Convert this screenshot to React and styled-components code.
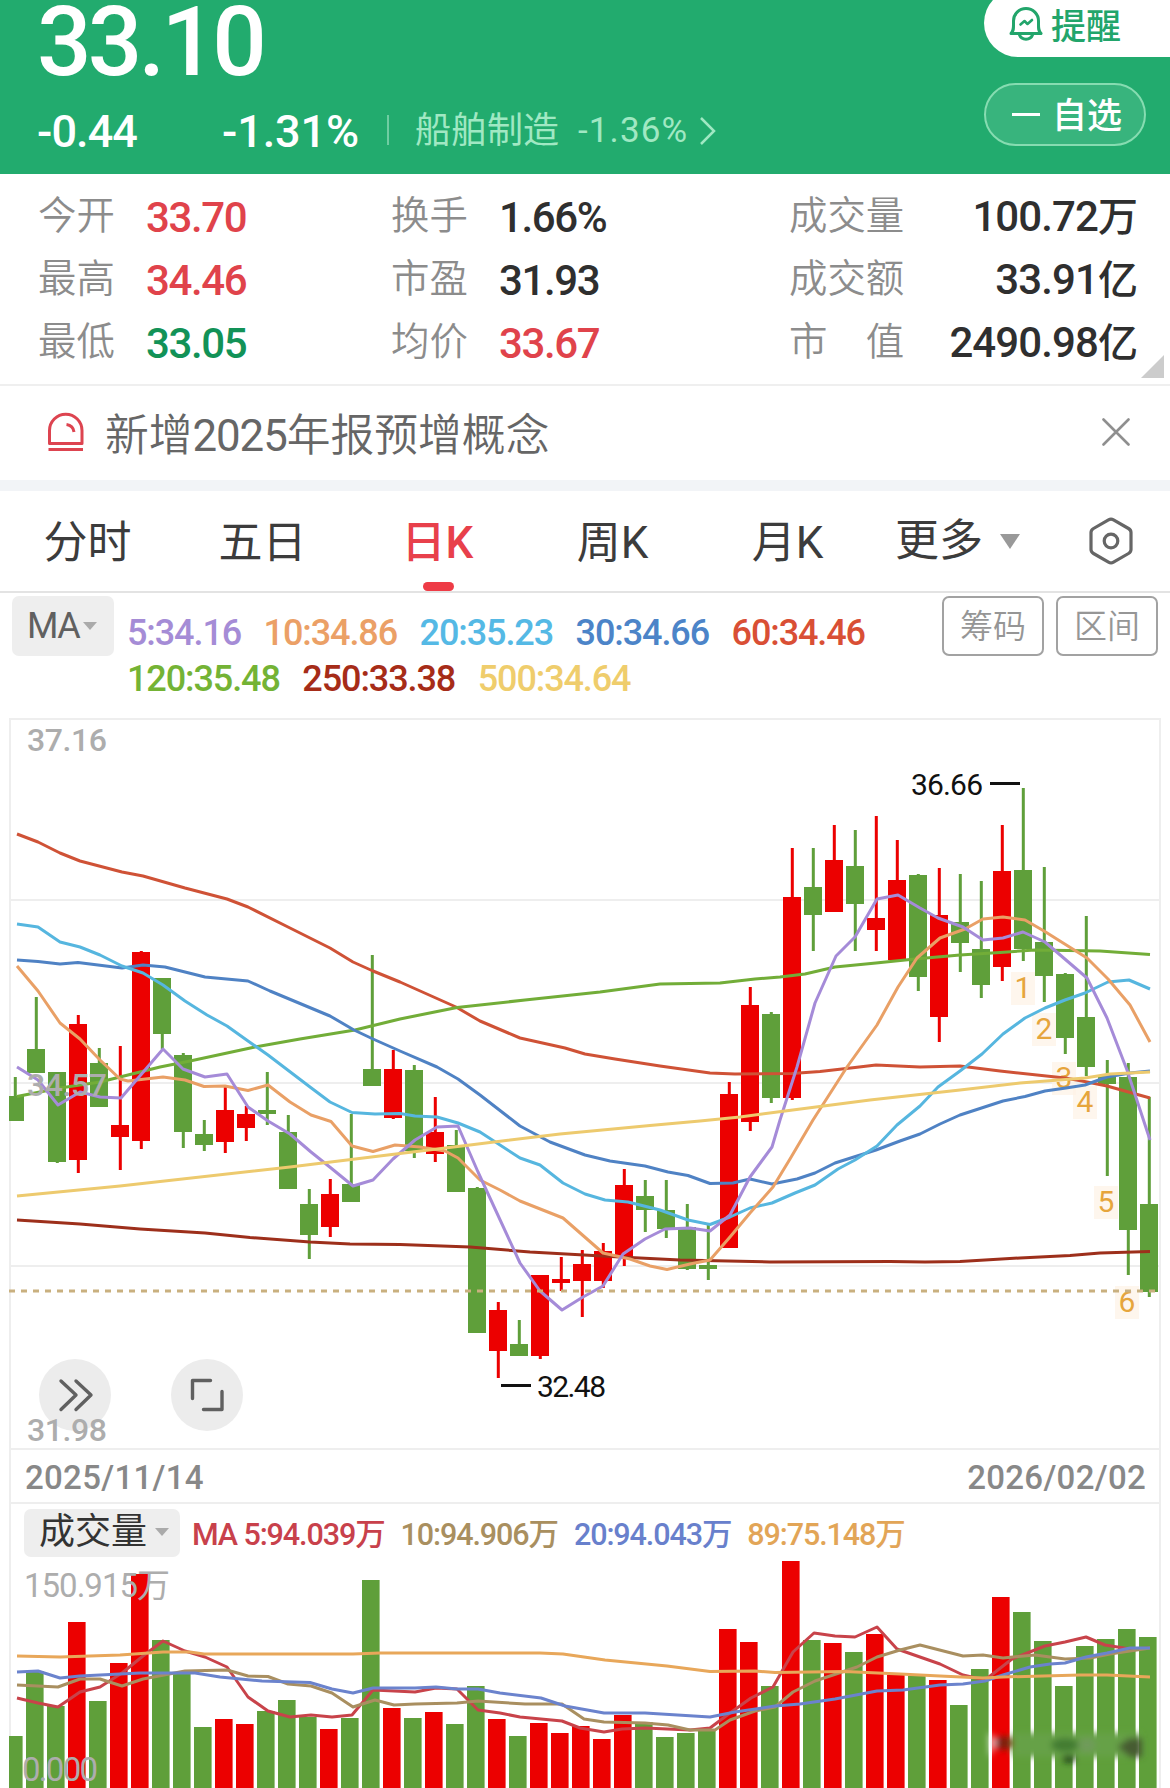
import React from "react";
import styled, { createGlobalStyle } from "styled-components";

const RED = "#ec0000";
const GREEN = "#5f9f3a";

const GlobalStyle = createGlobalStyle`
  * {
    box-sizing: border-box;
  }

  body {
    margin: 0;
    background: #fff;
    font-family: Roboto, "Noto Sans CJK SC", sans-serif;
  }
`;

const Page = styled.main`
  width: 1170px;
  height: 1788px;
  overflow: hidden;
  background: #fff;
`;

const Header = styled.header`
  display: flex;
  justify-content: space-between;
  height: 174px;
  padding-left: 37px;
  background: #22ab6e;
  color: #fff;
`;

const Price = styled.div`
  height: 84px;
  line-height: 84px;
  font-size: 96px;
  font-weight: 500;
  letter-spacing: -3.8px;
`;

const ChangeRow = styled.div`
  display: flex;
  align-items: center;
  height: 60px;
  margin-top: 18px;
`;

const Change = styled.span`
  width: ${(p) => p.$width}px;
  font-size: 45px;
  line-height: 60px;
  font-weight: 500;
  letter-spacing: ${(p) => p.$spacing}px;
  white-space: nowrap;
`;

const Separator = styled.span`
  width: 2px;
  height: 30px;
  margin: 0 26px 4px 0;
  background: #6fcda2;
`;

const Sector = styled.span`
  display: flex;
  align-items: center;
  color: #a0e8c3;
  font-size: 36px;
  line-height: 52px;
  padding-bottom: 3px;
`;

const SectorChange = styled.span`
  margin: 1px 11px 0 19px;
  font-size: 35px;
  letter-spacing: 1.1px;
`;

const Actions = styled.div`
  display: flex;
  flex-direction: column;
  width: 186px;
  gap: 26px;
`;

const ActionPill = styled.button`
  display: flex;
  align-items: center;
  height: 63px;
  width: 162px;
  padding: 0 0 4px 27px;
  border: 2px solid #86dcb1;
  border-radius: 32px;
  background: #38b47d;
  color: #fff;
  font-family: inherit;
  font-size: 35px;
  font-weight: 500;
  white-space: nowrap;
`;

const AlertPill = styled(ActionPill)`
  width: 186px;
  height: 68px;
  margin-top: -11px;
  padding: 1px 0 0 25px;
  border: 0;
  border-radius: 34px 0 0 34px;
  background: #fff;
  color: #22a56b;
  gap: 8px;
`;

const Minus = styled.i`
  width: 28px;
  height: 3px;
  margin: 3px 12px 0 -1px;
  background: #fff;
`;

const Stats = styled.section`
  position: relative;
  display: grid;
  grid-template-columns: 353px 398px 1fr;
  grid-template-rows: repeat(3, 63px);
  height: 212px;
  padding: 12px 32px 0 38px;
  border-bottom: 2px solid #efefef;
`;

const Stat = styled.div`
  display: flex;
  align-items: center;
  justify-content: ${(p) => (p.$spread ? "space-between" : "flex-start")};
`;

const StatLabel = styled.span`
  width: ${(p) => (p.$wide ? 116 : 108)}px;
  color: #8c8c8c;
  font-size: 38.4px;
  font-weight: 350;
  line-height: 56px;
  padding-bottom: 4px;
  white-space: nowrap;
`;

const StatValue = styled.span`
  color: ${(p) => p.$color || "#2f2f2f"};
  font-size: 42px;
  font-weight: 500;
  line-height: 56px;
  letter-spacing: ${(p) => (p.$wide ? -0.9 : -1.4)}px;
  white-space: nowrap;

  small {
    font-size: 40px;
    letter-spacing: 0;
  }
`;

const Corner = styled.i`
  position: absolute;
  right: 6px;
  bottom: 6px;
  border-left: 23px solid transparent;
  border-bottom: 23px solid #ccc;
`;

const Notice = styled.section`
  display: flex;
  align-items: center;
  height: 94px;
  padding: 0 40px 2px 46px;
`;

const NoticeText = styled.span`
  flex: 1;
  margin: 0 0 1px 19px;
  color: #666;
  font-size: 43.8px;
  font-weight: 350;

  span {
    font-weight: 400;
    letter-spacing: -1.1px;
  }
`;

const Band = styled.div`
  height: 11px;
  background: #f2f4f7;
`;

const Tabs = styled.nav`
  display: flex;
  height: 102px;
  border-bottom: 2px solid #e3e3e3;
`;

const Tab = styled.div`
  position: relative;
  width: 175px;
  color: ${(p) => (p.$active ? "#e8404b" : "#3c3c3c")};
  font-size: 44px;
  font-weight: ${(p) => (p.$active ? 500 : 400)};
  line-height: 105px;
  text-align: center;

  &::after {
    content: "";
    display: ${(p) => (p.$active ? "block" : "none")};
    position: absolute;
    left: 73px;
    bottom: 0;
    width: 31px;
    height: 9px;
    border-radius: 5px;
    background: #ee3b46;
  }
`;

const MoreTab = styled(Tab)`
  display: flex;
  align-items: center;
  width: 214px;
  padding-left: 20px;
  gap: 17px;
`;

const Caret = styled.i`
  flex: none;
  border: ${(p) => p.$size}px solid transparent;
  border-top: ${(p) => p.$drop}px solid ${(p) => p.$color};
  border-bottom: 0;
`;

const SettingsIcon = styled.svg`
  margin-top: 26px;
`;

const Legend = styled.section`
  display: flex;
  height: 125px;
  padding: 3px 12px 0;
`;

const Selector = styled.div`
  display: flex;
  align-items: center;
  flex: none;
  width: ${(p) => p.$width}px;
  height: ${(p) => p.$height}px;
  padding: 0 0 ${(p) => p.$lift || 0}px 15px;
  gap: ${(p) => p.$gap}px;
  border-radius: 7px;
  background: #eee;
  color: ${(p) => p.$color};
  font-size: 36px;
`;

const SelectorName = styled.span`
  letter-spacing: ${(p) => p.$spacing || 0}px;
  line-height: 44px;
`;

const LegendValues = styled.div`
  flex: 1;
  padding: 14px 0 0 13px;
`;

const LegendRow = styled.div`
  display: flex;
  gap: 22.5px;
  height: 46px;
  line-height: 46px;
`;

const LegendValue = styled.span`
  color: ${(p) => p.$color};
  font-size: 36px;
  font-weight: 500;
  letter-spacing: -1.1px;
`;

const OutlineButton = styled.button`
  width: 102px;
  height: 60px;
  margin-left: 12px;
  padding: 0 0 4px;
  border: 2px solid #a2a2a2;
  border-radius: 7px;
  background: #fff;
  color: #969696;
  font-family: inherit;
  font-size: 33px;
  font-weight: 350;
`;

const Frame = styled.section`
  margin: 0 9px;
  border: 2px solid #eee;
  border-width: 0 2px;
`;

const Chart = styled.svg`
  display: block;
  overflow: visible;
  font-family: Roboto, "Noto Sans CJK SC", sans-serif;
`;

const Dates = styled.div`
  display: flex;
  justify-content: space-between;
  height: 55px;
  padding: 0 13px 0 14px;
  border-bottom: 2px solid #eee;
  color: #888;
  font-size: 33px;
  font-weight: 500;
  line-height: 57px;
  letter-spacing: 0.3px;
`;

const VolumeHeader = styled.div`
  display: flex;
  height: 56px;
  padding: 5px 0 0 13px;
`;

const VolumeLegend = styled.div`
  display: flex;
  gap: 16px;
  margin-left: 12px;
  line-height: 52px;
`;

const VolumeLegendValue = styled.span`
  color: ${(p) => p.$color};
  font-size: 30.5px;
  font-weight: 500;
  letter-spacing: -1.1px;
`;

const stats = [
  ["今开", "33.70", "", "#e0434b"],
  ["换手", "1.66%", ""],
  ["成交量", "100.72", "万"],
  ["最高", "34.46", "", "#e0434b"],
  ["市盈", "31.93", ""],
  ["成交额", "33.91", "亿"],
  ["最低", "33.05", "", "#129257"],
  ["均价", "33.67", "", "#e0434b"],
  ["市　值", "2490.98", "亿"],
];

const legendRows = [
  [
    ["5:34.16", "#a58cd6"],
    ["10:34.86", "#eba066"],
    ["20:35.23", "#55b9e5"],
    ["30:34.66", "#4c84c8"],
    ["60:34.46", "#d94f35"],
  ],
  [
    ["120:35.48", "#74b335"],
    ["250:33.38", "#a62c18"],
    ["500:34.64", "#efcd6c"],
  ],
];

// color, high, body top, body bottom, low
const candles = [
  ["g", 1077, 1096, 1121, 1121], ["g", 997, 1049, 1073, 1073],
  ["g", 1072, 1072, 1162, 1163], ["r", 1015, 1024, 1160, 1173],
  ["g", 1048, 1063, 1107, 1107], ["r", 1046, 1125, 1137, 1170],
  ["r", 951, 952, 1141, 1149], ["g", 978, 978, 1034, 1049],
  ["g", 1053, 1055, 1132, 1148], ["g", 1120, 1134, 1145, 1151],
  ["r", 1087, 1110, 1142, 1153], ["r", 1106, 1114, 1128, 1141],
  ["g", 1072, 1110, 1114, 1125], ["g", 1115, 1132, 1189, 1189],
  ["g", 1189, 1204, 1235, 1259], ["r", 1179, 1194, 1227, 1237],
  ["g", 1114, 1184, 1202, 1202], ["g", 955, 1069, 1086, 1086],
  ["r", 1050, 1069, 1118, 1119], ["g", 1065, 1070, 1151, 1158],
  ["r", 1097, 1132, 1154, 1162], ["g", 1130, 1145, 1192, 1192],
  ["g", 1187, 1188, 1333, 1333], ["r", 1302, 1310, 1351, 1378],
  ["g", 1320, 1344, 1356, 1356], ["r", 1275, 1275, 1356, 1359],
  ["r", 1257, 1279, 1283, 1291], ["r", 1250, 1264, 1281, 1317],
  ["r", 1243, 1251, 1281, 1288], ["r", 1169, 1185, 1257, 1266],
  ["g", 1180, 1196, 1210, 1232], ["g", 1180, 1210, 1229, 1238],
  ["g", 1204, 1227, 1269, 1270], ["g", 1225, 1265, 1269, 1280],
  ["r", 1082, 1094, 1248, 1248], ["r", 987, 1005, 1122, 1131],
  ["g", 1012, 1014, 1098, 1103], ["r", 848, 897, 1098, 1100],
  ["g", 848, 887, 915, 951], ["r", 825, 860, 912, 912],
  ["g", 830, 866, 904, 951], ["r", 816, 918, 930, 951],
  ["r", 840, 880, 960, 960], ["g", 874, 875, 977, 991],
  ["r", 868, 915, 1017, 1042], ["g", 874, 922, 943, 972],
  ["g", 881, 949, 985, 998], ["r", 825, 871, 967, 981],
  ["g", 788, 870, 949, 961], ["g", 867, 942, 976, 1002],
  ["g", 973, 974, 1038, 1054], ["g", 916, 1017, 1067, 1076],
  ["g", 1060, 1076, 1084, 1176], ["g", 1063, 1077, 1230, 1275],
  ["g", 1097, 1204, 1292, 1297],
];

const priceLines = [
  ["#cf5236", "17,834 38,842 60,853 80,861 122,872 143,876 185,888 227,899 248,907 290,928 330,948 353,962 373,971 400,982 456,1007 480,1021 520,1038 565,1048 585,1054 615,1059 660,1066 710,1073 735,1074 792,1073.5 820,1071.5 855,1067.5 876,1065 920,1067 960,1066 1000,1071 1065,1078 1082,1081 1107,1086 1150,1098"],
  ["#9d2f1b", "17,1220 80,1224 140,1229 205,1233 250,1237.5 310,1242 350,1244 400,1244.5 470,1247 530,1252 620,1257 680,1260 770,1262 890,1261.5 925,1262 960,1261.5 985,1260 1020,1258 1070,1255.5 1100,1253 1150,1251.5"],
  ["#72ad38", "17,1096.5 60,1088 100,1082 160,1067 190,1061 255,1047 300,1039 355,1030 400,1019 457,1007.5 525,1000 600,992 660,984 720,983 755,979 780,977 805,974 835,967 876,963 915,959 960,955 1000,952.5 1035,950 1100,951 1150,954.5"],
  ["#4f82c4", "17,960 38,961.5 60,964 78,962.5 122,968 143,965 165,967 205,977 248,981 270,991 330,1016 354,1030 373,1039 400,1051 437,1067 458,1079 480,1095 520,1126 550,1142 585,1155 610,1161 645,1166 668,1172 688,1175.5 710,1183.5 733,1183 750,1179 772,1184 797,1179 815,1173 835,1163 876,1150 900,1141 920,1134 940,1124 960,1115 1003,1101 1025,1096.5 1045,1091 1066,1088 1085,1085 1107,1077 1130,1073 1150,1071"],
  ["#56b6df", "17,924 38,927 60,942 80,947 100,955 122,966 143,973 163,985 185,1001 207,1015 227,1026 248,1041 268,1055 310,1087 330,1102 352,1112.5 375,1114 400,1113.5 415,1116 437,1117 458,1123 480,1132 520,1158 540,1165 563,1183 585,1194 605,1200 628,1202 660,1210 688,1220 710,1224.5 730,1217 750,1208 772,1203 795,1193 815,1185 838,1169 855,1160 877,1146 897,1125 920,1106 938,1087 960,1071 982,1054 1003,1034 1025,1018 1045,1008 1065,1000 1085,993 1108,982 1129,980 1150,989"],
  ["#e9a066", "17,966 38,991 60,1023 80,1039 100,1060 120,1079 128,1081 163,1077 185,1080 204,1086.5 225,1086 248,1090.5 268,1085 290,1102 311,1115 331,1121.5 352,1146 373,1151.5 395,1145 420,1147 445,1151 458,1158 480,1180 500,1190 520,1201 563,1218 603,1253 630,1259 650,1266 667,1269.5 690,1264 710,1260 730,1237 750,1213 773,1187 790,1159 813,1120 847,1067 877,1025 898,987 917,958 940,938 965,929 983,919 1003,917 1025,920 1044,931 1087,958 1108,979 1130,1005 1150,1042"],
  ["#a58bd8", "17,1067 38,1080 58,1105 80,1092 100,1097 121,1098 163,1049 183,1069 205,1077 227,1074 248,1107 268,1121 290,1134 311,1152 331,1168 353,1186 373,1180 393,1159 415,1140 437,1127 458,1126 478,1172 520,1263 540,1291 562,1310 583,1297 603,1286 623,1254 645,1239 665,1229 690,1228 710,1231 730,1215 750,1177 772,1147 780,1120 797,1067 815,1003 836,956 855,937 877,899 898,895 920,908 938,918 963,927 983,940 1003,938 1023,932 1045,942 1087,978 1107,1018 1127,1070 1150,1140"],
  ["#edca6e", "17,1196 120,1186 290,1167 400,1153.5 470,1145 560,1134 650,1125.5 700,1121 740,1117 785,1111 870,1100 960,1090 1020,1083 1085,1078 1110,1074 1150,1072"],
];

const counts = [
  [1023, 998],
  [1044, 1039],
  [1064, 1088],
  [1085, 1112],
  [1106, 1212],
  [1127, 1312],
];

const volumes = [
  ["g", 1736], ["g", 1671], ["g", 1706], ["r", 1622], ["g", 1701],
  ["r", 1663], ["r", 1574], ["g", 1640], ["g", 1673], ["g", 1727],
  ["r", 1719], ["r", 1724], ["g", 1711], ["g", 1700], ["g", 1717],
  ["r", 1729], ["g", 1718], ["g", 1580], ["r", 1708], ["g", 1718],
  ["r", 1712], ["g", 1724], ["g", 1686], ["r", 1719], ["g", 1736],
  ["r", 1723], ["r", 1733], ["r", 1726], ["r", 1739], ["r", 1715],
  ["g", 1722], ["g", 1737], ["g", 1733], ["g", 1731], ["r", 1629],
  ["r", 1642], ["g", 1686], ["r", 1561], ["g", 1640], ["r", 1643],
  ["g", 1652], ["r", 1634], ["r", 1675], ["g", 1676], ["r", 1680],
  ["g", 1705], ["g", 1669], ["r", 1597], ["g", 1612], ["g", 1641],
  ["g", 1686], ["g", 1646], ["g", 1639], ["g", 1629], ["g", 1637],
];

const volumeLines = [
  ["#c8434a", "17,1698 38,1703 58,1707 80,1692 100,1687 122,1673 143,1656 163,1641 185,1651 205,1657 227,1667 248,1697 268,1711 290,1717 311,1715 332,1717 352,1715 373,1690 415,1692 436,1688 457,1689 478,1710 500,1713 520,1717 562,1721 580,1728 604,1732 622,1729 645,1728 690,1730 710,1728 730,1713 751,1698 773,1687 793,1652 814,1633 835,1636 855,1637 877,1627 897,1649 940,1664 963,1675 985,1680 1012,1659 1045,1646 1065,1642 1086,1637 1105,1645 1130,1649 1150,1648"],
  ["#a98f60", "17,1685 58,1687 80,1679 100,1679 122,1686 143,1679 185,1671 227,1670 248,1676 268,1676.5 288,1684 311,1686 332,1693 353,1707 375,1700 394,1705 415,1704 457,1703 478,1701 525,1704 562,1704 584,1719 604,1722 645,1723 668,1725 690,1730 715,1730 730,1720 755,1711 775,1707 793,1692 815,1681 857,1667 877,1657 900,1650 920,1645 963,1656 983,1655 1003,1658 1035,1655 1065,1659 1090,1658 1110,1654 1150,1648"],
  ["#6b83cd", "17,1672 38,1671 60,1678 80,1676 100,1675 140,1673 195,1673 220,1677 262,1681 310,1682.5 332,1689 353,1693 373,1688 415,1688 436,1687 457,1689 478,1689 500,1693 541,1698 565,1706 604,1713 645,1713 710,1717 735,1712 775,1706 800,1704 835,1699 877,1691 903,1690 940,1685 963,1684 985,1681 1003,1675 1030,1667 1050,1664 1065,1663 1086,1657 1107,1653 1130,1648 1150,1648"],
  ["#e8a75a", "17,1656 60,1657 120,1655 163,1652 190,1652 204,1654 353,1654 380,1653 540,1653 563,1654 605,1660 667,1666 710,1671.5 755,1671 775,1672.5 845,1671.5 900,1674 940,1676 983,1678 1003,1677 1080,1675 1107,1675 1150,1677"],
];

const volumeLegend = [
  ["MA 5:94.039万", "#c8414b"],
  ["10:94.906万", "#a98f5f"],
  ["20:94.043万", "#6880cc"],
  ["89:75.148万", "#e2a557"],
];

const fill = (c) => (c === "r" ? RED : GREEN);

const BellIcon = () => (
  <svg width="34" height="36" viewBox="0 0 34 36" fill="none" stroke="currentColor" strokeWidth="3" strokeLinejoin="round" strokeLinecap="round">
    <path d="M2 27.500C5 25 4.500 22 4.500 15a12.500 12.500 0 0 1 25 0c0 7-.5 10 2.500 12.500z" />
    <path d="M10.500 29c2 5.500 11 5.500 13 0" />
    <path d="M11.500 18.500l4-3.500 3 3 4.500-4" strokeWidth="2.600" />
  </svg>
);

const SirenIcon = () => (
  <svg width="40" height="40" viewBox="0 0 40 40" fill="none" stroke="#dd4450" strokeWidth="3">
    <path d="M3.500 31.500V18.500a16.200 16.200 0 0 1 32.500 0v13z" strokeLinejoin="round" />
    <path d="M2.500 37.500h34.500" />
    <path d="M20.500 12.500c4 .5 7 3.500 7.500 7.500" />
  </svg>
);

const PriceChart = () => (
  <Chart width="1148" height="731" viewBox="11 718 1148 731">
    <path d="M9 719H1161M9 900H1161M9 1083H1161M9 1266H1161M9 1449H1161" stroke="#eee" strokeWidth="2" />
    <circle cx="75" cy="1395" r="36" fill="#ececec" />
    <circle cx="207" cy="1395" r="36" fill="#ececec" />
    <g fill="none" stroke="#606060" strokeWidth="3.400" strokeLinecap="round" strokeLinejoin="round">
      <path d="M61 1381l15 14-15 14.500M76 1381l15 14-15 14.500" />
      <path d="M192.500 1398.500v-18h18M222 1391.500v18h-18.500" />
    </g>
    {candles.map(([c, high, top, bottom, low], i) => {
      const x = 15 + 21 * i;
      const left = Math.max(9, x - 9);
      return (
        <g key={i} fill={fill(c)}>
          <rect x={x - 1.2} y={high} width="3" height={low - high} />
          <rect x={left} y={top} width={x + 9 - left} height={bottom - top} />
        </g>
      );
    })}
    {counts.map(([x, y], i) => (
      <g key={x}>
        <rect x={x - 12} y={y - 26} width="24" height="33" fill="#fdf2e6" fillOpacity="0.7" />
        <text x={x} y={y} fontSize="30" fill="#e6a53c" textAnchor="middle">{i + 1}</text>
      </g>
    ))}
    {priceLines.map(([color, points]) => (
      <polyline key={color} points={points} fill="none" stroke={color} strokeWidth="3" strokeLinejoin="round" />
    ))}
    <path d="M9 1291H1158" stroke="#c9b07f" strokeWidth="2.800" strokeDasharray="6 6" />
    <path d="M990 783.500h30M501 1385.500h30" stroke="#111" strokeWidth="3" />
    <g fontSize="30" fill="#111">
      <text x="911" y="795" textLength="72">36.66</text>
      <text x="537" y="1397" textLength="69">32.48</text>
    </g>
    <g fontSize="32" fill="#adadad" fontWeight="500">
      <text x="27" y="751" textLength="80">37.16</text>
      <text x="27" y="1095.500" textLength="80">34.57</text>
      <text x="27" y="1441" textLength="80">31.98</text>
    </g>
  </Chart>
);

const VolumeChart = () => (
  <Chart width="1148" height="228" viewBox="11 1560 1148 228">
    <defs>
      <filter id="soft" x="-20%" y="-40%" width="140%" height="180%">
        <feGaussianBlur stdDeviation="3" />
      </filter>
    </defs>
    {volumes.map(([c, top], i) => {
      const left = Math.max(9, 5 + 21 * i);
      return <rect key={i} x={left} y={top} width={22.6 + 21 * i - left} height={1790 - top} fill={fill(c)} />;
    })}
    {volumeLines.map(([color, points]) => (
      <polyline key={color} points={points} fill="none" stroke={color} strokeWidth="3" strokeLinejoin="round" />
    ))}
    <g filter="url(#soft)">
      <rect x="1013" y="1733" width="127" height="24" fill="#66a146" />
      <path d="M988 1732l10 9-9 17z" fill="#fff" fillOpacity="0.6" />
      <ellipse cx="1004" cy="1743" rx="9" ry="7" fill="#7d200c" />
      <ellipse cx="1065" cy="1745" rx="14" ry="7" fill="#437b32" />
      <ellipse cx="1069" cy="1759" rx="7" ry="3.500" fill="#183812" />
      <ellipse cx="1087" cy="1745" rx="9" ry="7" fill="#6f9b5a" />
      <path d="M1117 1747l12-9h13v19h-12z" fill="#465b30" />
    </g>
    <g fontSize="33" fill="#adadad">
      <text x="24" y="1597" textLength="146">150.915万</text>
      <text x="22" y="1781" textLength="76">0.000</text>
    </g>
  </Chart>
);

const App = () => {
  return (
    <Page>
      <GlobalStyle />

      <Header>
        <div>
          <Price>33.10</Price>
          <ChangeRow>
            <Change $width={185} $spacing={-0.9}>-0.44</Change>
            <Change $width={165} $spacing={-0.1}>-1.31%</Change>
            <Separator />
            <Sector>
              船舶制造
              <SectorChange>-1.36%</SectorChange>
              <svg width="17" height="30" viewBox="0 0 17 30" fill="none" stroke="currentColor" strokeWidth="2.500">
                <path d="M2 2l13 13L2 28" />
              </svg>
            </Sector>
          </ChangeRow>
        </div>
        <Actions>
          <AlertPill>
            <BellIcon />
            提醒
          </AlertPill>
          <ActionPill>
            <Minus />
            自选
          </ActionPill>
        </Actions>
      </Header>

      <Stats>
        {stats.map(([label, value, unit, color]) => (
          <Stat key={label} $spread={unit !== ""}>
            <StatLabel $wide={unit !== ""}>{label}</StatLabel>
            <StatValue $wide={unit !== ""} $color={color}>
              {value}
              {unit && <small>{unit}</small>}
            </StatValue>
          </Stat>
        ))}
        <Corner />
      </Stats>

      <Notice>
        <SirenIcon />
        <NoticeText>
          新增<span>2025</span>年报预增概念
        </NoticeText>
        <svg width="28" height="28" viewBox="0 0 28 28" stroke="#8f8f8f" strokeWidth="2.600" strokeLinecap="round">
          <path d="M1.500 1.500l25 25M26.500 1.500l-25 25" />
        </svg>
      </Notice>
      <Band />

      <Tabs>
        <Tab>分时</Tab>
        <Tab>五日</Tab>
        <Tab $active>日K</Tab>
        <Tab>周K</Tab>
        <Tab>月K</Tab>
        <MoreTab>
          更多
          <Caret $size={10.5} $drop={15} $color="#999" />
        </MoreTab>
        <SettingsIcon width="44" height="48" viewBox="0 0 44 48" fill="none" stroke="#666" strokeWidth="3.200" strokeLinejoin="round">
          <path d="M19.500 2.800Q22 1.300 24.500 2.800L39.500 11.500Q42 13 42 15.500V32.500Q42 35 39.500 36.500L24.500 45.200Q22 46.700 19.500 45.200L4.500 36.500Q2 35 2 32.500V15.500Q2 13 4.500 11.500Z" />
          <circle cx="22" cy="24" r="6.800" />
        </SettingsIcon>
      </Tabs>

      <Legend>
        <Selector $width={102} $height={60} $gap={4} $color="#606060">
          <SelectorName $spacing={-1.5}>MA</SelectorName>
          <Caret $size={7} $drop={8} $color="#aaa" />
        </Selector>
        <LegendValues>
          {legendRows.map((row, i) => (
            <LegendRow key={i}>
              {row.map(([text, color]) => (
                <LegendValue key={text} $color={color}>{text}</LegendValue>
              ))}
            </LegendRow>
          ))}
        </LegendValues>
        <OutlineButton>筹码</OutlineButton>
        <OutlineButton>区间</OutlineButton>
      </Legend>

      <Frame>
        <PriceChart />
        <Dates>
          <span>2025/11/14</span>
          <span>2026/02/02</span>
        </Dates>
        <VolumeHeader>
          <Selector $width={156} $height={48} $lift={2} $gap={8} $color="#333">
            <SelectorName>成交量</SelectorName>
            <Caret $size={7} $drop={8} $color="#aaa" />
          </Selector>
          <VolumeLegend>
            {volumeLegend.map(([text, color]) => (
              <VolumeLegendValue key={text} $color={color}>{text}</VolumeLegendValue>
            ))}
          </VolumeLegend>
        </VolumeHeader>
        <VolumeChart />
      </Frame>
    </Page>
  );
};

export default App;
